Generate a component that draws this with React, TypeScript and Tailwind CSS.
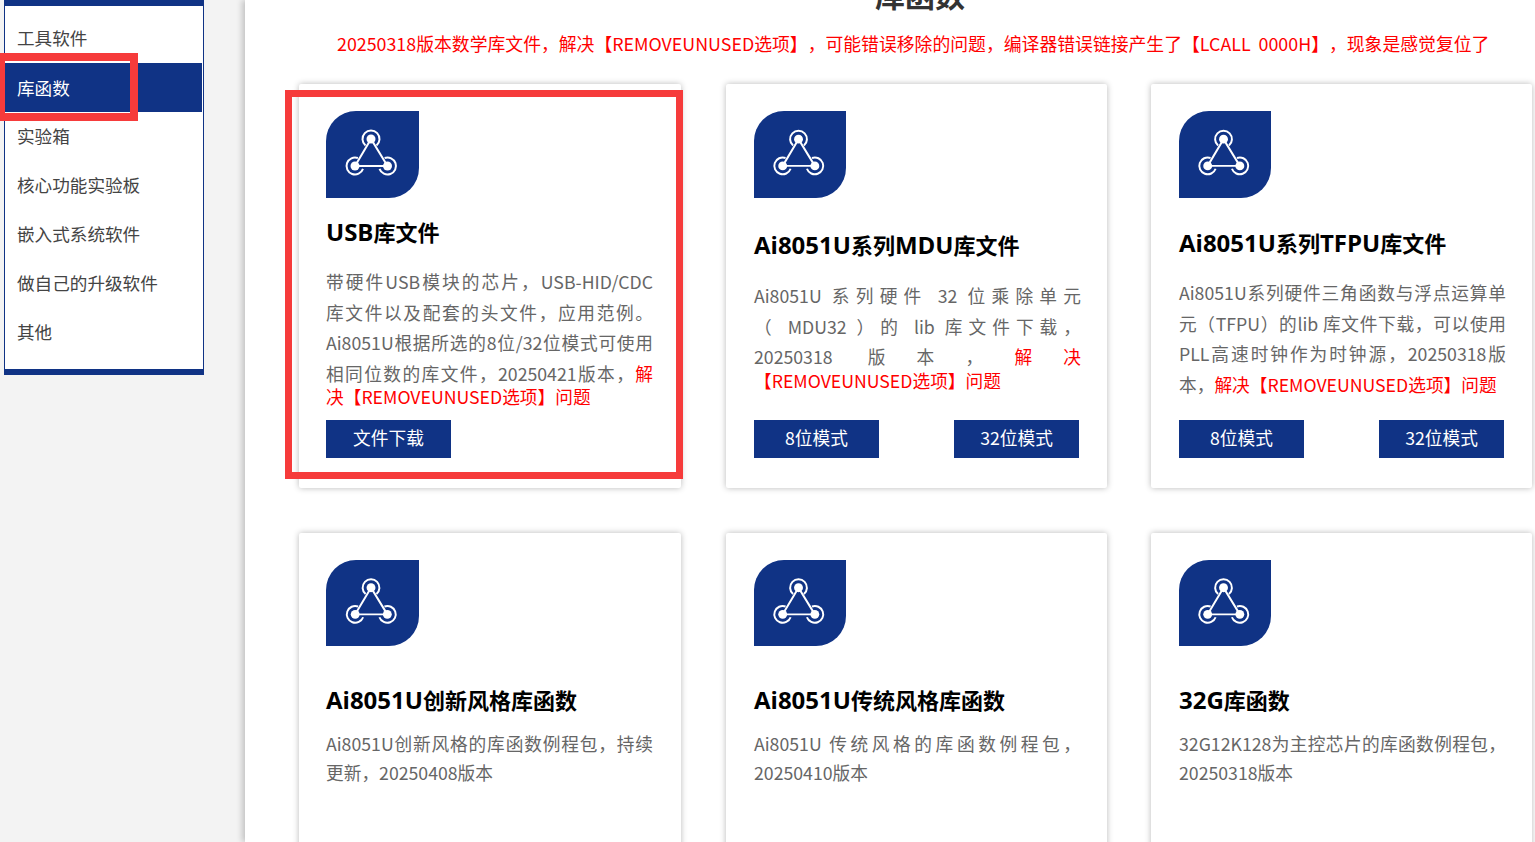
import type { ReactNode } from 'react'

const menu = ['工具软件', '库函数', '实验箱', '核心功能实验板', '嵌入式系统软件', '做自己的升级软件', '其他']

type Item = {
  title: string
  text: ReactNode
  red?: ReactNode
  buttons: string[]
  pad: string
  icon: string
  titleGap: string
  textGap: string
  mark?: boolean
}

const items: Item[] = [
  {
    title: 'USB库文件',
    text: (
      <>
        带硬件USB模块的芯片，USB-HID/CDC<span className="whitespace-nowrap">库文件</span>以及配套的头文件，应用范例。Ai8051U根据所选的8位/32位模式可使用相同位数的库文件，20250421版本，
      </>
    ),
    red: (
      <>
        解<span className="whitespace-nowrap">决【REMOVEUNUSED选项】问题</span>
      </>
    ),
    buttons: ['文件下载'],
    pad: 'pl-[27px]',
    icon: 'h-[87px] w-[93px]',
    titleGap: 'mt-[15px]',
    textGap: 'mt-[16px]',
    mark: true,
  },
  {
    title: 'Ai8051U系列MDU库文件',
    text: (
      <>
        Ai8051U 系列硬件 32 位乘除单元<span className="whitespace-nowrap">（ MDU32 ）</span>的 lib 库文件下载，
        <span className="whitespace-nowrap">20250318 版本</span>，
      </>
    ),
    red: (
      <>
        解决<span className="whitespace-nowrap">【REMOVEUNUSED选项】问题</span>
      </>
    ),
    buttons: ['8位模式', '32位模式'],
    pad: 'pl-[28.5px]',
    icon: 'h-[87px] w-[92px]',
    titleGap: 'mt-[28px]',
    textGap: 'mt-[17px]',
  },
  {
    title: 'Ai8051U系列TFPU库文件',
    text: 'Ai8051U系列硬件三角函数与浮点运算单元（TFPU）的lib 库文件下载，可以使用PLL高速时钟作为时钟源，20250318版本，',
    red: '解决【REMOVEUNUSED选项】问题',
    buttons: ['8位模式', '32位模式'],
    pad: 'pl-[28px]',
    icon: 'h-[87px] w-[92px]',
    titleGap: 'mt-[26px]',
    textGap: 'mt-[16px]',
  },
  {
    title: 'Ai8051U创新风格库函数',
    text: 'Ai8051U创新风格的库函数例程包，持续更新，20250408版本',
    buttons: [],
    pad: 'pl-[27px]',
    icon: 'h-[86px] w-[93px]',
    titleGap: 'mt-[35px]',
    textGap: 'mt-[11px]',
  },
  {
    title: 'Ai8051U传统风格库函数',
    text: 'Ai8051U 传统风格的库函数例程包，20250410版本',
    buttons: [],
    pad: 'pl-[28.5px]',
    icon: 'h-[86px] w-[92px]',
    titleGap: 'mt-[35px]',
    textGap: 'mt-[11px]',
  },
  {
    title: '32G库函数',
    text: '32G12K128为主控芯片的库函数例程包，20250318版本',
    buttons: [],
    pad: 'pl-[28px]',
    icon: 'h-[86px] w-[92px]',
    titleGap: 'mt-[35px]',
    textGap: 'mt-[11px]',
  },
]

function LeafIcon({ size }: { size: string }) {
  return (
    <div className={`${size} rounded-tl-[30px] rounded-br-[30px] bg-[#103385]`}>
      <svg viewBox="0 0 93 87" className="h-full w-full" fill="none" stroke="#fff" strokeWidth="2">
        <path d="M45 28 29 55H61.500Z" />
        <path d="M39.500 34.500A8.500 8.500 0 1 1 50.500 34.500" />
        <path d="M31.900 47A8.500 8.500 0 1 0 37 57.900" />
        <path d="M58.600 47A8.500 8.500 0 1 1 53.500 57.900" />
        <circle cx="45" cy="28" r="4.500" fill="#fff" stroke="none" />
        <circle cx="29" cy="55" r="4.500" fill="#fff" stroke="none" />
        <circle cx="61.500" cy="55" r="4.500" fill="#fff" stroke="none" />
      </svg>
    </div>
  )
}

// latin part of the titles runs a bit larger than the chinese part
function Title({ text }: { text: string }) {
  return (
    <>
      {text.split(/([A-Za-z0-9]+)/).map((part, i) =>
        i % 2 === 1 ? (
          <span key={i} className="font-['Open_Sans',sans-serif] text-[24px]">
            {part}
          </span>
        ) : (
          part
        ),
      )}
    </>
  )
}

function Card({ item }: { item: Item }) {
  return (
    <div className={`relative flex h-[404px] flex-col rounded-[2px] bg-white pt-[27px] pb-[30px] shadow-[0_0_6px_rgba(0,0,0,0.28)] ${item.pad}`}>
      <LeafIcon size={item.icon} />
      <h4 className={`${item.titleGap} text-[22px] leading-[36px] font-bold text-black`}>
        <Title text={item.title} />
      </h4>
      <p className={`${item.textGap} w-[327px] text-justify text-[17.7px] leading-[17px] text-[#ff0000] [text-spacing-trim:space-all]`}>
        <span className={item.red ? 'leading-[30.6px] text-[#666]' : 'leading-[29px] text-[#666]'}>{item.text}</span>
        {item.red}
      </p>
      {item.buttons.length > 0 && (
        <div className="mt-auto flex w-[325px] justify-between">
          {item.buttons.map((b) => (
            <a key={b} className="flex h-[38px] w-[125px] items-center justify-center bg-[#103385] pb-1 text-[17.7px] text-white">
              {b}
            </a>
          ))}
        </div>
      )}
      {item.mark && (
        <div className="absolute top-[6px] left-[-14px] h-[389px] w-[398px] border-[7px] border-[#f63b3b]" />
      )}
    </div>
  )
}

export default function App() {
  return (
    <div className="flex h-[842px] overflow-hidden bg-[#f3f3f3] font-['Noto_Sans_CJK_SC','Noto_Sans',sans-serif]">
      <aside className="relative w-[245px] shrink-0 pl-1">
        <div className="w-[200px] border-x border-t-[6px] border-b-[6px] border-x-[#103385] border-y-[#103385] bg-white pt-2 pb-3">
          {menu.map((m, i) => (
            <div
              key={m}
              className={
                i === 1
                  ? 'mr-px flex h-[49px] items-center bg-[#103385] pt-0.5 pl-3 text-[17.6px] text-white'
                  : 'flex h-[49px] items-center pl-3 text-[17.6px] text-[#444]'
              }
            >
              {m}
            </div>
          ))}
        </div>
        <div className="absolute top-[53px] left-[-3px] h-[68px] w-[141px] border-[8px] border-[#f63b3b]" />
      </aside>
      <main className="flex-1 bg-white pl-[54px] shadow-[-3px_0_6px_rgba(0,0,0,0.2)]">
        <h3 className="mt-[-24px] w-[1242px] text-center text-[30px] leading-[36px] font-bold text-[#333]">库函数</h3>
        <p className="mt-[16px] pl-[38px] text-[17.83px] leading-[30px] whitespace-nowrap text-[#ff0000] [text-spacing-trim:space-all]">
          20250318版本数学库文件，解决【REMOVEUNUSED选项】，可能错误移除的问题，编译器错误链接产生了【LCALL&nbsp;&nbsp;0000H】，现象是感觉复位了
        </p>
        <div className="mt-[26px] grid grid-cols-[382px_381px_381px] gap-x-[44.5px] gap-y-[45px]">
          {items.map((item) => (
            <Card key={item.title} item={item} />
          ))}
        </div>
      </main>
    </div>
  )
}
